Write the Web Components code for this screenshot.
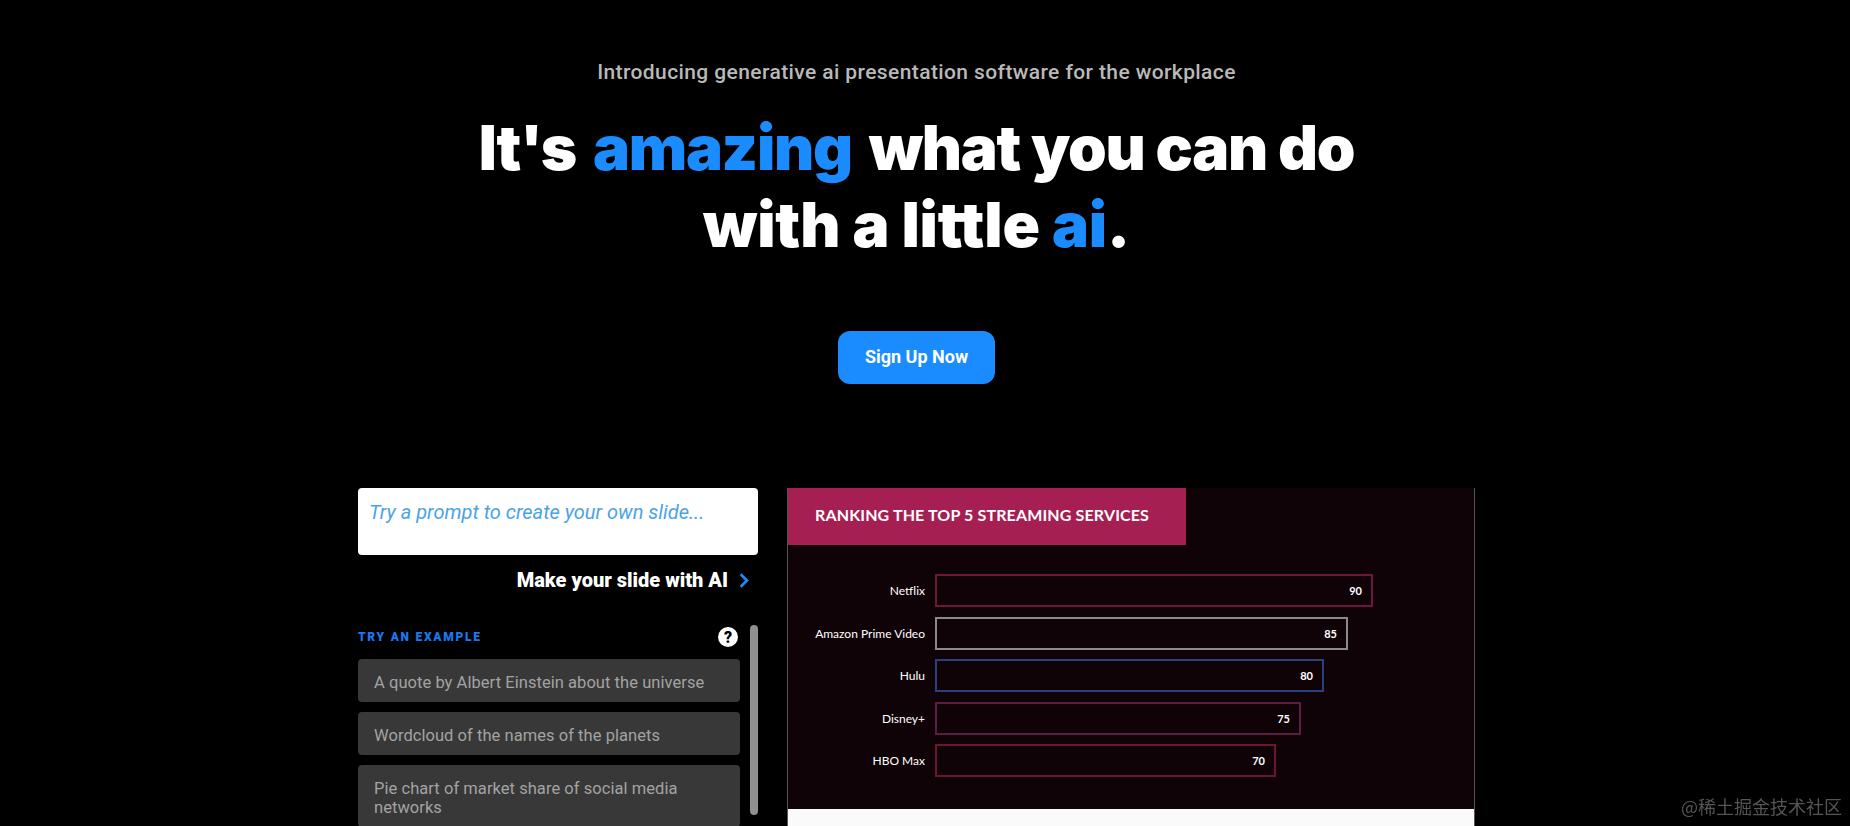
<!DOCTYPE html>
<html lang="en">
<head>
<meta charset="utf-8">
<title>Generative AI presentation software</title>
<style>
  html, body { margin: 0; height: 826px; overflow: hidden; background: #000; }
  body { font-family: "Roboto", "Liberation Sans", sans-serif; color: #fff; }
</style>
</head>
<body>
<demo-page>
  <hero-banner slot="hero"></hero-banner>
  <prompt-panel slot="left">
    <example-item>A quote by Albert Einstein about the universe</example-item>
    <example-item>Wordcloud of the names of the planets</example-item>
    <example-item>Pie chart of market share of social media networks</example-item>
  </prompt-panel>
  <ranking-slide slot="right" title-text="RANKING THE TOP 5 STREAMING SERVICES">
    <bar-row label="Netflix" value="90" width="438" tone="#6e1739"></bar-row>
    <bar-row label="Amazon Prime Video" value="85" width="413" tone="#8a8a8a"></bar-row>
    <bar-row label="Hulu" value="80" width="389" tone="#2c3f7e"></bar-row>
    <bar-row label="Disney+" value="75" width="366" tone="#5c1d40"></bar-row>
    <bar-row label="HBO Max" value="70" width="341" tone="#6a1636"></bar-row>
  </ranking-slide>
</demo-page>
<water-mark>@稀土掘金技术社区</water-mark>

<script>
// Page frame: hero on top, demo columns under it
class DemoPage extends HTMLElement {
  constructor() {
    super();
    this.attachShadow({ mode: 'open' });
    this.shadowRoot.innerHTML = `
      <style>
        :host { display: block; width: 1833px; height: 826px; overflow: hidden; }
        .demo {
          display: grid;
          grid-template-columns: 400px 688px;
          column-gap: 29px;
          width: 1117px;
          margin: 104px auto 0;
          align-items: start;
        }
      </style>
      <slot name="hero"></slot>
      <div class="demo">
        <slot name="left"></slot>
        <slot name="right"></slot>
      </div>
    `;
  }
}

class HeroBanner extends HTMLElement {
  constructor() {
    super();
    this.attachShadow({ mode: 'open' });
    this.shadowRoot.innerHTML = `
      <style>
        :host { display: flex; flex-direction: column; align-items: center; padding-top: 58px; }
        p { margin: 0; font-size: 21px; line-height: 28px; font-weight: 500; letter-spacing: .4px; color: #b9b9b9; }
        h1 {
          margin: 23px 0 0;
          font-family: "Inter", "Roboto", sans-serif;
          font-size: 62px; line-height: 77px; font-weight: 900; letter-spacing: -1.3px; text-align: center;
        }
        h1 span { color: #1a8cff; }
        h1 .line { color: inherit; letter-spacing: -.2px; }
        h1 .line span { color: #1a8cff; }
        .gap { margin: 0 6px; }
        a {
          display: flex; align-items: center; justify-content: center;
          width: 157px; height: 53px; box-sizing: border-box; padding-bottom: 3px; margin-top: 68px;
          background: #1a8cff; border-radius: 12px;
          font-size: 18px; font-weight: 700; color: #fff;
        }
      </style>
      <p>Introducing generative ai presentation software for the workplace</p>
      <h1>It's <span class="gap">amazing</span> what you can do<br><span class="line">with a little <span>ai</span>.</span></h1>
      <a>Sign Up Now</a>
    `;
  }
}

class PromptPanel extends HTMLElement {
  constructor() {
    super();
    this.attachShadow({ mode: 'open' });
    this.shadowRoot.innerHTML = `
      <style>
        :host { display: block; }
        .prompt {
          height: 67px; box-sizing: border-box; padding: 12px 11px;
          background: #fff; border-radius: 4px;
          font-size: 20px; line-height: 24px; font-style: italic; color: #4aa3e8;
        }
        .make {
          display: flex; justify-content: flex-end; align-items: center; gap: 11px;
          height: 30px; margin-top: 10px; padding-right: 9px;
          font-size: 20px; font-weight: 900; color: #fff;
        }
        .make svg { display: block; }
        .examples { position: relative; margin-top: 30px; padding-right: 18px; }
        .head {
          display: flex; justify-content: space-between; align-items: center;
          height: 24px; margin-bottom: 10px;
        }
        .label { font-size: 12px; font-weight: 900; letter-spacing: 1.75px; color: #1a78f0; }
        .help { display: block; margin-right: 2px; }
        .list { display: flex; flex-direction: column; gap: 10px; }
        .thumb {
          position: absolute; right: 0; top: 0;
          width: 8px; height: 190px; border-radius: 4px; background: #8f8f8f;
        }
      </style>
      <div class="prompt">Try a prompt to create your own slide...</div>
      <div class="make">
        <span>Make your slide with AI</span>
        <svg width="10" height="15" viewBox="0 0 10 15" fill="none"><path d="M1.6 1.2 8 7.5 1.6 13.8" stroke="#1a8cff" stroke-width="2.6"/></svg>
      </div>
      <div class="examples">
        <div class="head">
          <span class="label">TRY AN EXAMPLE</span>
          <svg class="help" width="20" height="20" viewBox="0 0 20 20">
            <circle cx="10" cy="10" r="10" fill="#fff"/>
            <text x="10" y="15.5" text-anchor="middle" font-family="Roboto" font-weight="900" font-size="16" fill="#000">?</text>
          </svg>
        </div>
        <div class="list"><slot></slot></div>
        <div class="thumb"></div>
      </div>
    `;
  }
}

class ExampleItem extends HTMLElement {
  constructor() {
    super();
    this.attachShadow({ mode: 'open' });
    this.shadowRoot.innerHTML = `
      <style>
        :host {
          display: block; padding: 14px 16px 10px;
          background: #383838; border-radius: 4px;
          font-size: 16.5px; line-height: 19px; letter-spacing: .05px; color: #a3a3a3;
        }
      </style>
      <slot></slot>
    `;
  }
}

class RankingSlide extends HTMLElement {
  constructor() {
    super();
    this.attachShadow({ mode: 'open' });
    this.shadowRoot.innerHTML = `
      <style>
        :host {
          display: block; box-sizing: border-box; font-family: "Lato", sans-serif;
          background: #100308; border-right: 1px solid #555; border-left: 1px solid #555;
        }
        .band {
          display: flex; align-items: center;
          width: 398px; height: 57px; box-sizing: border-box; padding: 0 0 4px 27px;
          background: #a51f52; font-size: 16px; letter-spacing: .14px; font-weight: 700; color: #fff;
        }
        .rows { display: flex; flex-direction: column; gap: 9.5px; height: 264px; box-sizing: border-box; padding-top: 29px; }
        .foot { height: 17px; background: #fafafa; }
      </style>
      <div class="band"></div>
      <div class="rows"><slot></slot></div>
      <div class="foot"></div>
    `;
  }

  connectedCallback() {
    this.shadowRoot.querySelector('.band').textContent = this.getAttribute('title-text');
  }
}

class BarRow extends HTMLElement {
  constructor() {
    super();
    this.attachShadow({ mode: 'open' });
    this.shadowRoot.innerHTML = `
      <style>
        :host { display: flex; align-items: center; height: 33px; font-size: 12px; color: #fff; }
        .label { width: 137px; text-align: right; margin-right: 10px; }
        .bar {
          display: flex; align-items: center; justify-content: flex-end;
          height: 33px; box-sizing: border-box; padding-right: 9px;
          border: 2px solid; font-size: 11px; font-weight: 700;
        }
      </style>
      <div class="label"></div>
      <div class="bar"></div>
    `;
  }

  connectedCallback() {
    const bar = this.shadowRoot.querySelector('.bar');
    this.shadowRoot.querySelector('.label').textContent = this.getAttribute('label');
    bar.textContent = this.getAttribute('value');
    bar.style.width = this.getAttribute('width') + 'px';
    bar.style.borderColor = this.getAttribute('tone');
  }
}

class WaterMark extends HTMLElement {
  constructor() {
    super();
    this.attachShadow({ mode: 'open' });
    this.shadowRoot.innerHTML = `
      <style>
        :host {
          position: fixed; right: 8px; bottom: 8px;
          font-family: "Noto Sans CJK SC", "Lato", sans-serif;
          font-size: 18px; line-height: 24px; color: #555;
        }
      </style>
      <slot></slot>
    `;
  }
}

customElements.define('demo-page', DemoPage);
customElements.define('hero-banner', HeroBanner);
customElements.define('prompt-panel', PromptPanel);
customElements.define('example-item', ExampleItem);
customElements.define('ranking-slide', RankingSlide);
customElements.define('bar-row', BarRow);
customElements.define('water-mark', WaterMark);
</script>
</body>
</html>
